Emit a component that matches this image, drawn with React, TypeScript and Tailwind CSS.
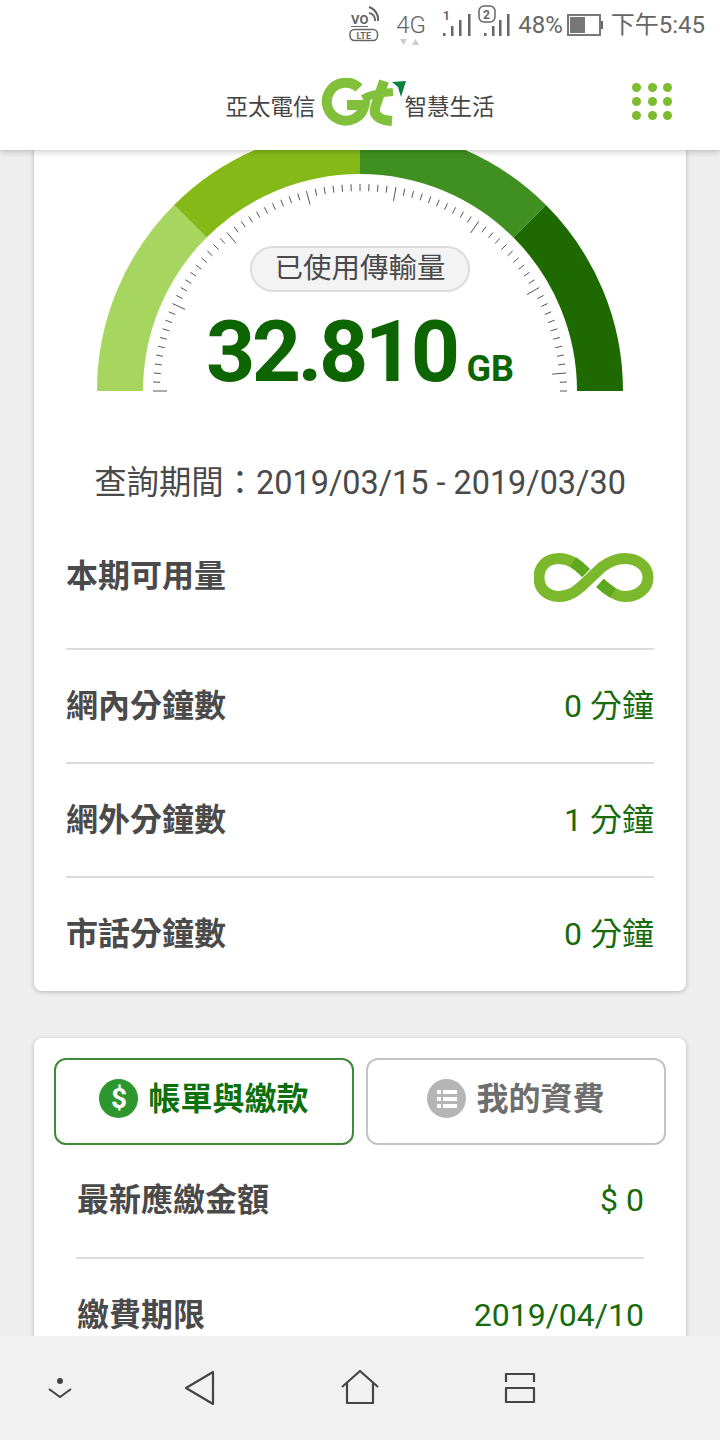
const cjk = "font-['Roboto','Noto_Sans_CJK_TC',sans-serif]";

function polar(r: number, deg: number) {
  const a = (deg * Math.PI) / 180;
  return [264 - r * Math.cos(a), 264 - r * Math.sin(a)];
}

function segment(from: number, to: number) {
  const [x1, y1] = polar(263, from);
  const [x2, y2] = polar(263, to);
  const [x3, y3] = polar(217, to);
  const [x4, y4] = polar(217, from);
  return `M${x1} ${y1}A263 263 0 0 1 ${x2} ${y2}L${x3} ${y3}A217 217 0 0 0 ${x4} ${y4}Z`;
}

function Gauge() {
  const ticks = [];
  for (let i = 0; i <= 72; i++) {
    const deg = i * 2.5;
    const [x1, y1] = polar(207, deg);
    const [x2, y2] = polar(i % 10 === 0 ? 193 : 200, deg);
    ticks.push(<line key={i} x1={x1} y1={y1} x2={x2} y2={y2} stroke="#555" strokeWidth={1} />);
  }
  return (
    <svg width="528" height="266" viewBox="0 0 528 266" className="block">
      <path d={segment(0, 45)} fill="#a6d65f" />
      <path d={segment(45, 90)} fill="#84b918" />
      <path d={segment(90, 135)} fill="#3f9020" />
      <path d={segment(135, 180)} fill="#1f6a00" />
      {ticks}
    </svg>
  );
}

function Row({ label, value }: { label: string; value: string }) {
  return (
    <div className="flex h-[114px] items-center justify-between border-b-2 border-[#dcdcdc] last:h-[113px] last:border-b-0 last:pb-[2px]">
      <span className="text-[32px] font-bold text-[#4a4a4a]">{label}</span>
      <span className="text-[32px] text-[#166b0c]">{value}</span>
    </div>
  );
}

function InfinityIcon() {
  return (
    <svg width="120" height="52" viewBox="0 0 120 52" className="mt-[6px]">
      <path
        d="M52 20C44 12 36 5.5 25 5.5C13 5.5 5 13 5 24.5C5 36 13 43.5 25 43.5C36 43.5 42 38 50 31L68 14C76 8 82 5.5 91 5.5C103 5.5 114 13 114 24.5C114 36 103 43.5 91 43.5C82 43.5 75 37 66 30"
        fill="none"
        stroke="#7cb82c"
        strokeWidth={11}
      />
      <path d="M52 20C48 16 44 12 39 9" fill="none" stroke="#5ea81f" strokeWidth={11} />
      <path d="M66 30C70 34 74 37 79 40" fill="none" stroke="#5ea81f" strokeWidth={11} />
    </svg>
  );
}

function Bars({ x }: { x: number[] }) {
  const tops = [33, 26, 20, 14];
  return (
    <>
      {x.map((bx, i) => (
        <rect key={bx} x={bx} y={tops[i]} width="2.5" height={36 - tops[i]} fill="#666" />
      ))}
    </>
  );
}

function StatusBar() {
  return (
    <div className="flex h-[50px] items-center justify-end pr-[15px] text-[24px] text-[#666]">
      <svg width="30" height="50" viewBox="0 0 30 50">
        <text x="2" y="24" fontSize="13" fontWeight="700" fill="#666" fontFamily="Roboto">VO</text>
        <path d="M2 26.5H19" stroke="#666" strokeWidth="1" />
        <path d="M20 13a7 7 0 0 1 6 8M20 7a13 13 0 0 1 9 14" fill="none" stroke="#666" strokeWidth="2" />
        <rect x="1" y="29.5" width="27.5" height="11" rx="4.5" fill="none" stroke="#666" strokeWidth="1.5" />
        <text x="7.5" y="38.5" fontSize="9" fontWeight="700" fill="#666" fontFamily="Roboto">LTE</text>
      </svg>
      <div className="relative ml-[17px] w-[30px] font-light leading-[30px]">
        <span>4G</span>
        <svg width="22" height="6" viewBox="0 0 22 6" className="absolute left-[4px] top-[29px]">
          <path d="M0 0H7L3.5 6Z" fill="#ccc" />
          <path d="M12 6H19L15.5 0Z" fill="#ccc" />
        </svg>
      </div>
      <svg width="28" height="50" viewBox="0 0 28 50" className="ml-[17px]">
        <text x="0" y="20" fontSize="12" fontWeight="700" fill="#666" fontFamily="Roboto">1</text>
        <Bars x={[0, 8, 16, 25]} />
      </svg>
      <svg width="32" height="50" viewBox="0 0 32 50" className="ml-[7px]">
        <rect x="1" y="6" width="16" height="16" rx="5" fill="none" stroke="#666" strokeWidth="1.5" />
        <text x="5" y="19" fontSize="12" fontWeight="700" fill="#666" fontFamily="Roboto">2</text>
        <Bars x={[6, 14, 21, 29]} />
      </svg>
      <span className="ml-[8px]">48%</span>
      <div className="ml-[4px] flex items-center">
        <div className="h-[22px] w-[34px] border-2 border-[#777] p-[1px]">
          <div className="h-full w-[15px] bg-[#777]" />
        </div>
        <div className="h-[8px] w-[2px] bg-[#666]" />
      </div>
      <span className="ml-[8px]">下午5:45</span>
    </div>
  );
}

function Logo() {
  return (
    <svg width="85" height="48" viewBox="0 0 85 48" className="ml-[5px] -mr-[1px]">
      <path d="M38 10A19 19 0 1 0 43.5 27H26" fill="none" stroke="#80c03a" strokeWidth="10" />
      <path d="M63 3L54 30C52 38 59 42 71 43" fill="none" stroke="#80c03a" strokeWidth="10" />
      <path d="M42 21C50 16 60 15 72 14" fill="none" stroke="#80c03a" strokeWidth="8" />
      <path d="M71 4L85 3L80 19L77 9Z" fill="#0d7f3f" />
    </svg>
  );
}

function Tabs() {
  return (
    <div className="flex gap-3 px-5 pt-5">
      <div className="flex h-[87px] w-[300px] items-center justify-center gap-[10px] rounded-xl border-2 border-[#3f8a37] pb-[6px]">
        <div className="flex h-[39px] w-[39px] items-center justify-center rounded-full bg-[#2d962f] text-[28px] font-bold text-white">$</div>
        <span className="text-[32px] font-bold text-[#0c700c]">帳單與繳款</span>
      </div>
      <div className="flex h-[87px] w-[300px] items-center justify-center gap-[10px] rounded-xl border-2 border-[#c4c4c4] pb-[6px]">
        <div className="flex h-[39px] w-[39px] flex-col items-center justify-center gap-[3px] rounded-full bg-[#b5b5b5]">
          <div className="flex gap-[2px]"><div className="h-[4px] w-[4px] bg-white" /><div className="h-[4px] w-[14px] bg-white" /></div>
          <div className="flex gap-[2px]"><div className="h-[4px] w-[4px] bg-white" /><div className="h-[4px] w-[14px] bg-white" /></div>
          <div className="flex gap-[2px]"><div className="h-[4px] w-[4px] bg-white" /><div className="h-[4px] w-[14px] bg-white" /></div>
        </div>
        <span className="text-[32px] font-bold text-[#6e6e6e]">我的資費</span>
      </div>
    </div>
  );
}

export default function App() {
  return (
    <div className={`flex h-[1440px] w-[720px] flex-col overflow-hidden bg-[#efeeef] ${cjk}`}>
      <header className="z-10 h-[150px] shrink-0 bg-white shadow-[0_2px_6px_rgba(0,0,0,0.2)]">
        <StatusBar />
        <div className="relative flex h-[100px] items-center justify-center pt-[4px]">
          <span className="mt-[12px] text-[22.5px] text-[#444]">亞太電信</span>
          <Logo />
          <span className="mt-[12px] text-[22.5px] text-[#444]">智慧生活</span>
          <div className="absolute right-[48px] top-[33px] grid grid-cols-3 gap-x-[6.5px] gap-y-[5px]">
            {[0, 1, 2, 3, 4, 5, 6, 7, 8].map((i) => (
              <div key={i} className="h-[9px] w-[9px] rounded-full bg-[#7dbb2f]" />
            ))}
          </div>
        </div>
      </header>
      <main className="min-h-0 flex-1 overflow-hidden">
        <div className="mx-[34px] -mt-[41px] rounded-lg bg-white px-8 shadow-[0_1px_4px_rgba(0,0,0,0.25)]">
          <div className="relative flex justify-center pt-[18px]">
            <Gauge />
            <div className="absolute left-0 right-0 top-[137px] flex flex-col items-center">
              <div className="flex h-[46px] w-[220px] items-center justify-center rounded-full border-2 border-[#dcdcdc] bg-[#f3f3f3] text-[28.5px] text-[#4a4a4a]">已使用傳輸量</div>
              <div className="mt-[10px] flex items-baseline font-bold text-[#0c6500]">
                <span className="text-[86px] leading-[100px] tracking-[-3.5px]">32.810</span>
                <span className="ml-[10px] text-[36px]">GB</span>
              </div>
            </div>
          </div>
          <div className="mt-[67px] text-center text-[32.4px] leading-[46px] text-[#4a4a4a]">查詢期間：2019/03/15 - 2019/03/30</div>
          <div className="mt-[11px]">
            <div className="flex h-[133px] items-center justify-between border-b-2 border-[#dcdcdc] pb-[13px]">
              <span className="text-[32px] font-bold text-[#4a4a4a]">本期可用量</span>
              <InfinityIcon />
            </div>
            <Row label="網內分鐘數" value="0 分鐘" />
            <Row label="網外分鐘數" value="1 分鐘" />
            <Row label="市話分鐘數" value="0 分鐘" />
          </div>
        </div>
        <div className="mx-[34px] mt-[47px] rounded-lg bg-white shadow-[0_1px_4px_rgba(0,0,0,0.25)]">
          <Tabs />
          <div className="px-[42px]">
            <div className="flex h-[114px] items-center justify-between border-b-2 border-[#dcdcdc] pb-[2px] pl-[1px]">
              <span className="text-[32px] font-bold text-[#4a4a4a]">最新應繳金額</span>
              <span className="text-[32px] text-[#166b0c]">$ 0</span>
            </div>
            <div className="flex h-[112px] items-center justify-between pl-[1px]">
              <span className="text-[32px] font-bold text-[#4a4a4a]">繳費期限</span>
              <span className="text-[32px] text-[#166b0c]">2019/04/10</span>
            </div>
          </div>
        </div>
      </main>
      <nav className="z-10 flex h-[104px] shrink-0 items-center bg-[#f1f1f1]">
        <div className="flex w-full items-center">
          <svg width="30" height="24" viewBox="0 0 30 24" className="ml-[45px]" fill="none" stroke="#444" strokeWidth="2">
            <circle cx="15" cy="5" r="3" fill="#444" stroke="none" />
            <path d="M4 13L15 21L26 13" />
          </svg>
          <svg width="34" height="36" viewBox="0 0 34 36" className="ml-[108px]" fill="none" stroke="#444" strokeWidth="2.2" strokeLinejoin="round">
            <path d="M3 18L30 2V34Z" />
          </svg>
          <svg width="40" height="36" viewBox="0 0 40 36" className="ml-[123px]" fill="none" stroke="#444" strokeWidth="2.2" strokeLinejoin="round">
            <path d="M2 17L20 1L38 17M7 13V33H33V13" />
          </svg>
          <svg width="32" height="32" viewBox="0 0 32 32" className="ml-[124px]" fill="none" stroke="#444" strokeWidth="2.2" strokeLinejoin="round">
            <path d="M2 10V2H30V10M2 16H30V30H2Z" />
          </svg>
        </div>
      </nav>
    </div>
  );
}
